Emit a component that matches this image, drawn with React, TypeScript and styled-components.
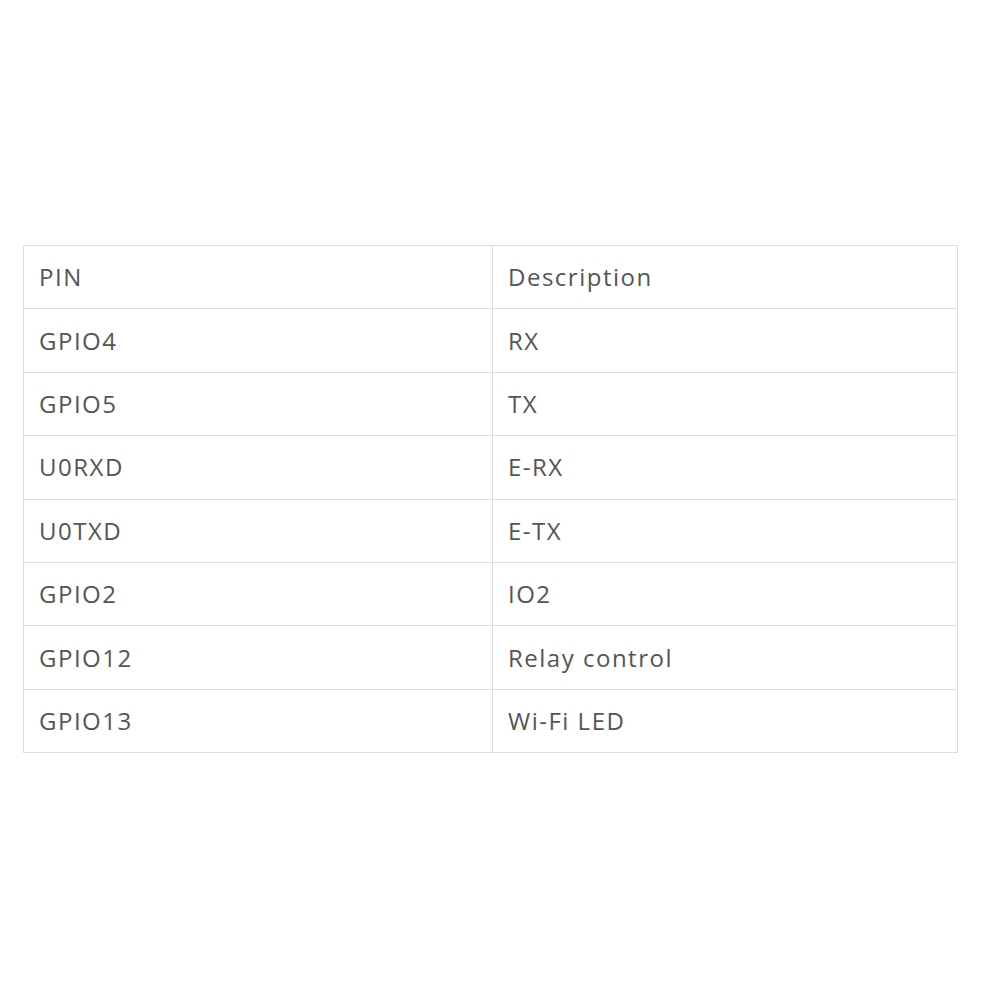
import styled, { createGlobalStyle } from "styled-components";

const GlobalStyle = createGlobalStyle`
  body {
    margin: 0;
    background: #ffffff;
    font-family: "Open Sans", "Noto Sans", sans-serif;
  }
`;

const Page = styled.div`
  padding: 245px 42px 0 23px;
`;

const PinTable = styled.table`
  width: 935px;
  border-collapse: collapse;
  color: #555555;
  font-size: 24px;
  letter-spacing: 1.5px;
`;

const Cell = styled.td<{ $wide?: boolean }>`
  border: 1px solid #dddddd;
  height: 63.4px;
  padding: 0 15px 1px;
  width: ${(p) => (p.$wide ? "469px" : "auto")};
  text-align: left;
  font-weight: 400;
  box-sizing: border-box;
`;

const rows: [string, string][] = [
  ["PIN", "Description"],
  ["GPIO4", "RX"],
  ["GPIO5", "TX"],
  ["U0RXD", "E-RX"],
  ["U0TXD", "E-TX"],
  ["GPIO2", "IO2"],
  ["GPIO12", "Relay control"],
  ["GPIO13", "Wi-Fi LED"],
];

export default function App() {
  return (
    <Page>
      <GlobalStyle />
      <PinTable>
        <tbody>
          {rows.map(([pin, desc]) => (
            <tr key={pin}>
              <Cell $wide>{pin}</Cell>
              <Cell>{desc}</Cell>
            </tr>
          ))}
        </tbody>
      </PinTable>
    </Page>
  );
}
